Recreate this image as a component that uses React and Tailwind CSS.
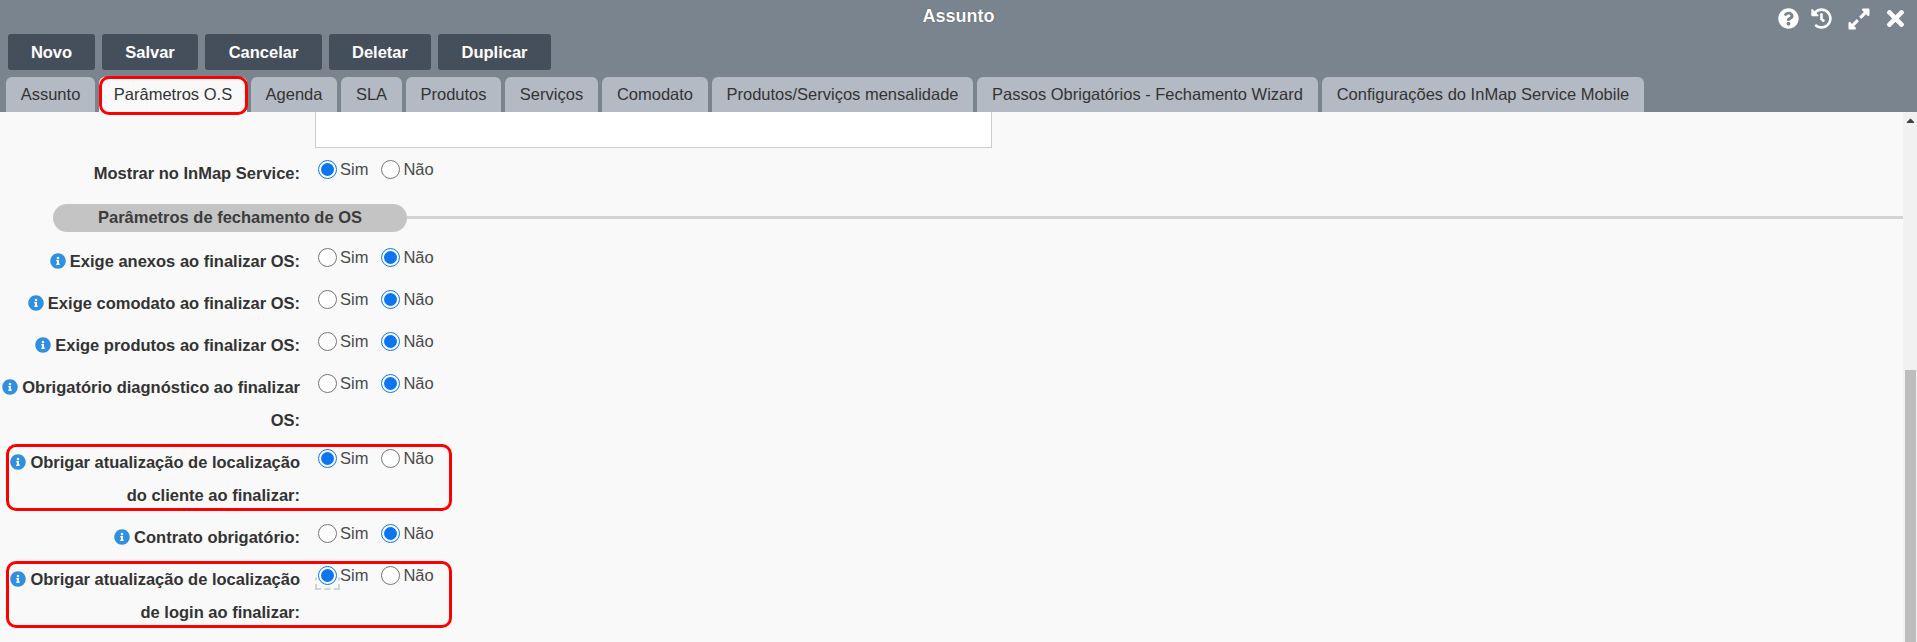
import React from 'react';
import { FaQuestionCircle, FaHistory, FaExpandAlt, FaTimes, FaInfoCircle, FaCaretUp } from 'react-icons/fa';

const buttons = [
  { label: 'Novo', width: 'w-[87px]' },
  { label: 'Salvar', width: 'w-[96px]' },
  { label: 'Cancelar', width: 'w-[117px]' },
  { label: 'Deletar', width: 'w-[102px]' },
  { label: 'Duplicar', width: 'w-[113px]' },
];

const tabs = [
  { label: 'Assunto', width: 'w-[89px]' },
  { label: 'Parâmetros O.S', width: 'w-[148px]', active: true },
  { label: 'Agenda', width: 'w-[86px]' },
  { label: 'SLA', width: 'w-[61px]' },
  { label: 'Produtos', width: 'w-[95px]' },
  { label: 'Serviços', width: 'w-[93px]' },
  { label: 'Comodato', width: 'w-[106px]' },
  { label: 'Produtos/Serviços mensalidade', width: 'w-[261px]' },
  { label: 'Passos Obrigatórios - Fechamento Wizard', width: 'w-[341px]' },
  { label: 'Configurações do InMap Service Mobile', width: 'w-[322px]' },
];

const Radio = ({ checked, label }) => (
  <span className="flex items-center gap-[3px]">
    <span className={`flex h-[19px] w-[19px] items-center justify-center rounded-full border bg-white ${checked ? 'border-[1.5px] border-[#0b76f0]' : 'border-[#767676]'}`}>
      {checked && <span className="h-[13px] w-[13px] rounded-full bg-[#0b76f0]" />}
    </span>
    <span className="text-[16.5px] leading-[19px] text-[#4a4a4a]">{label}</span>
  </span>
);

const Row = ({ lines, info = true, value = 'nao', mark, focus }) => (
  <div className="relative mb-[9px] flex">
    <div className="w-[300px] shrink-0 text-right text-[16.5px] font-bold leading-[33px] text-[#333333]">
      {lines.map((line, i) => (
        <div key={line} className="whitespace-nowrap">
          {i === 0 && info && <FaInfoCircle className="mr-[4px] inline-block align-[-2px] text-[16px] text-[#2f8fe0]" />}
          {line}
        </div>
      ))}
    </div>
    <div className="ml-[18px] flex h-[19px] gap-[13px] pt-[5px]">
      <span className="relative flex">
        <Radio checked={value === 'sim'} label="Sim" />
        {focus && <span className="absolute -left-[3px] -top-[3px] h-[25px] w-[25px] border-2 border-dashed border-[#cfd4da] [clip-path:inset(50%_0_0_0)]" />}
      </span>
      <Radio checked={value === 'nao'} label="Não" />
    </div>
    {mark && <div className="pointer-events-none absolute -top-[2px] left-[6px] h-[67px] w-[446px] rounded-[10px] border-[3px] border-[#ff0000]" />}
  </div>
);

export default function App() {
  return (
    <div className="flex h-screen flex-col overflow-hidden bg-[#f9f9f9] font-['Liberation_Sans',Arial,sans-serif]">
      {/* Header */}
      <header className="relative h-[112px] shrink-0 bg-[#7a848e]">
        <div className="pt-[6px] text-center text-[18px] font-bold leading-[21px] text-white [text-shadow:0_0_1px_#333]">Assunto</div>
        <div className="absolute right-[9px] top-[5px] flex h-[27px] items-center text-white">
          <FaQuestionCircle className="text-[21px]" />
          <FaHistory className="ml-[12px] text-[21px]" />
          <FaExpandAlt className="ml-[15px] text-[24px]" />
          <FaTimes className="ml-[12px] text-[25px]" />
        </div>

        <div className="mt-[7px] flex gap-[7px] pl-[8px]">
          {buttons.map((b) => (
            <button key={b.label} className={`h-[36px] rounded-[3px] bg-[#454f5b] text-[16.5px] font-bold text-white ${b.width}`}>
              {b.label}
            </button>
          ))}
        </div>

        <div className="mt-[7px] flex gap-[4px] pl-[6px]">
          {tabs.map((t) => (
            <div
              key={t.label}
              className={`relative h-[35px] rounded-t-[6px] text-center text-[16.5px] leading-[35px] text-[#333333] ${t.width} ${t.active ? 'bg-[#f9f9f9]' : 'bg-[#b3bac3]'}`}
            >
              {t.label}
              {t.active && <div className="absolute -bottom-[3px] left-0 -right-[1px] -top-[1px] rounded-[10px] border-[3px] border-[#ff0000]" />}
            </div>
          ))}
        </div>
      </header>

      {/* Form */}
      <main className="flex min-h-0 flex-1">
        <div className="min-w-0 flex-1">
          <div className="ml-[315px] h-[36px] w-[677px] border border-t-0 border-[#cccccc] bg-white" />

          <div className="mt-[9px]">
            <Row lines={['Mostrar no InMap Service:']} info={false} value="sim" />
          </div>

          <div className="relative mb-[13px] mt-[14px] flex items-center">
            <div className="ml-[53px] h-[28px] w-[354px] rounded-full bg-[#c4c4c4] text-center text-[16.5px] font-bold leading-[27px] text-[#3c3c3c]">
              Parâmetros de fechamento de OS
            </div>
            <div className="mb-[2px] h-[3px] flex-1 bg-[#d4d4d4]" />
          </div>

          <Row lines={['Exige anexos ao finalizar OS:']} />
          <Row lines={['Exige comodato ao finalizar OS:']} />
          <Row lines={['Exige produtos ao finalizar OS:']} />
          <Row lines={['Obrigatório diagnóstico ao finalizar', 'OS:']} />
          <Row lines={['Obrigar atualização de localização', 'do cliente ao finalizar:']} value="sim" mark />
          <Row lines={['Contrato obrigatório:']} />
          <Row lines={['Obrigar atualização de localização', 'de login ao finalizar:']} value="sim" mark focus />
        </div>

        {/* Scrollbar */}
        <div className="flex w-[14px] shrink-0 flex-col bg-[#f1f1f1]">
          <FaCaretUp className="mx-auto mt-[2px] text-[13px] text-[#444444]" />
          <div className="mx-auto mt-auto h-[272px] w-[11px] bg-[#bdbdbd]" />
        </div>
      </main>
    </div>
  );
}
